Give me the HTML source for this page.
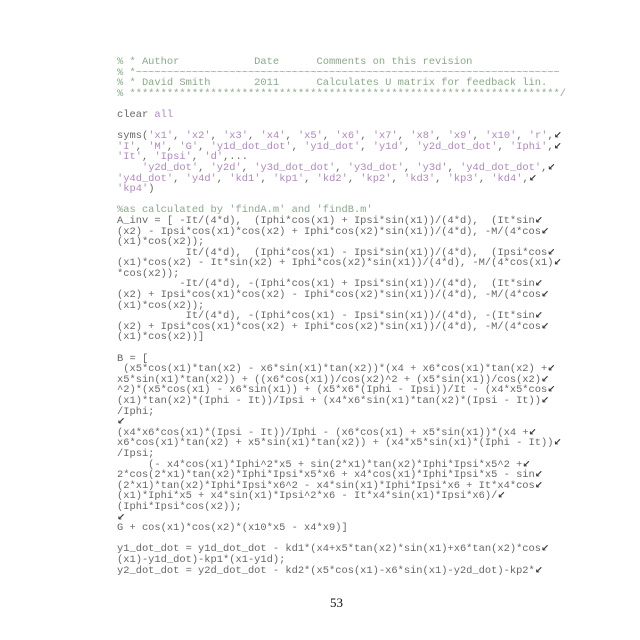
<!DOCTYPE html>
<html><head><meta charset="utf-8"><style>
html,body{margin:0;padding:0;background:#fff;width:640px;height:640px;overflow:hidden}
pre{position:absolute;left:117px;top:57px;margin:0;font-family:"Liberation Mono",monospace;font-size:10.4px;line-height:10.6px;color:#666;white-space:pre}
.c{color:#88aa88}.s{color:#b088c0}
.a{color:#333;font-family:"DejaVu Sans",sans-serif;font-size:9.5px;font-weight:bold}
.pn{position:absolute;left:330px;top:595px;font-family:"Liberation Serif",serif;font-size:13px;color:#111}
</style></head><body>
<pre><span class="c">% * Author            Date      Comments on this revision
% *~~~~~~~~~~~~~~~~~~~~~~~~~~~~~~~~~~~~~~~~~~~~~~~~~~~~~~~~~~~~~~~~~~~~
% * David Smith       2011      Calculates U matrix for feedback lin.
% *********************************************************************/</span>

clear <span class="s">all</span>

syms(<span class="s">'x1'</span>, <span class="s">'x2'</span>, <span class="s">'x3'</span>, <span class="s">'x4'</span>, <span class="s">'x5'</span>, <span class="s">'x6'</span>, <span class="s">'x7'</span>, <span class="s">'x8'</span>, <span class="s">'x9'</span>, <span class="s">'x10'</span>, <span class="s">'r'</span>,<span class="a">↙</span>
<span class="s">'I'</span>, <span class="s">'M'</span>, <span class="s">'G'</span>, <span class="s">'y1d_dot_dot'</span>, <span class="s">'y1d_dot'</span>, <span class="s">'y1d'</span>, <span class="s">'y2d_dot_dot'</span>, <span class="s">'Iphi'</span>,<span class="a">↙</span>
<span class="s">'It'</span>, <span class="s">'Ipsi'</span>, <span class="s">'d'</span>,...
    <span class="s">'y2d_dot'</span>, <span class="s">'y2d'</span>, <span class="s">'y3d_dot_dot'</span>, <span class="s">'y3d_dot'</span>, <span class="s">'y3d'</span>, <span class="s">'y4d_dot_dot'</span>,<span class="a">↙</span>
<span class="s">'y4d_dot'</span>, <span class="s">'y4d'</span>, <span class="s">'kd1'</span>, <span class="s">'kp1'</span>, <span class="s">'kd2'</span>, <span class="s">'kp2'</span>, <span class="s">'kd3'</span>, <span class="s">'kp3'</span>, <span class="s">'kd4'</span>,<span class="a">↙</span>
<span class="s">'kp4'</span>)

<span class="c">%as calculated by 'findA.m' and 'findB.m'</span>
A_inv = [ -It/(4*d),  (Iphi*cos(x1) + Ipsi*sin(x1))/(4*d),  (It*sin<span class="a">↙</span>
(x2) - Ipsi*cos(x1)*cos(x2) + Iphi*cos(x2)*sin(x1))/(4*d), -M/(4*cos<span class="a">↙</span>
(x1)*cos(x2));
           It/(4*d),  (Iphi*cos(x1) - Ipsi*sin(x1))/(4*d),  (Ipsi*cos<span class="a">↙</span>
(x1)*cos(x2) - It*sin(x2) + Iphi*cos(x2)*sin(x1))/(4*d), -M/(4*cos(x1)<span class="a">↙</span>
*cos(x2));
          -It/(4*d), -(Iphi*cos(x1) + Ipsi*sin(x1))/(4*d),  (It*sin<span class="a">↙</span>
(x2) + Ipsi*cos(x1)*cos(x2) - Iphi*cos(x2)*sin(x1))/(4*d), -M/(4*cos<span class="a">↙</span>
(x1)*cos(x2));
           It/(4*d), -(Iphi*cos(x1) - Ipsi*sin(x1))/(4*d), -(It*sin<span class="a">↙</span>
(x2) + Ipsi*cos(x1)*cos(x2) + Iphi*cos(x2)*sin(x1))/(4*d), -M/(4*cos<span class="a">↙</span>
(x1)*cos(x2))]

B = [
 (x5*cos(x1)*tan(x2) - x6*sin(x1)*tan(x2))*(x4 + x6*cos(x1)*tan(x2) +<span class="a">↙</span>
x5*sin(x1)*tan(x2)) + ((x6*cos(x1))/cos(x2)^2 + (x5*sin(x1))/cos(x2)<span class="a">↙</span>
^2)*(x5*cos(x1) - x6*sin(x1)) + (x5*x6*(Iphi - Ipsi))/It - (x4*x5*cos<span class="a">↙</span>
(x1)*tan(x2)*(Iphi - It))/Ipsi + (x4*x6*sin(x1)*tan(x2)*(Ipsi - It))<span class="a">↙</span>
/Iphi;
<span class="a">↙</span>
(x4*x6*cos(x1)*(Ipsi - It))/Iphi - (x6*cos(x1) + x5*sin(x1))*(x4 +<span class="a">↙</span>
x6*cos(x1)*tan(x2) + x5*sin(x1)*tan(x2)) + (x4*x5*sin(x1)*(Iphi - It))<span class="a">↙</span>
/Ipsi;
     (- x4*cos(x1)*Iphi^2*x5 + sin(2*x1)*tan(x2)*Iphi*Ipsi*x5^2 +<span class="a">↙</span>
2*cos(2*x1)*tan(x2)*Iphi*Ipsi*x5*x6 + x4*cos(x1)*Iphi*Ipsi*x5 - sin<span class="a">↙</span>
(2*x1)*tan(x2)*Iphi*Ipsi*x6^2 - x4*sin(x1)*Iphi*Ipsi*x6 + It*x4*cos<span class="a">↙</span>
(x1)*Iphi*x5 + x4*sin(x1)*Ipsi^2*x6 - It*x4*sin(x1)*Ipsi*x6)/<span class="a">↙</span>
(Iphi*Ipsi*cos(x2));
<span class="a">↙</span>
G + cos(x1)*cos(x2)*(x10*x5 - x4*x9)]

y1_dot_dot = y1d_dot_dot - kd1*(x4+x5*tan(x2)*sin(x1)+x6*tan(x2)*cos<span class="a">↙</span>
(x1)-y1d_dot)-kp1*(x1-y1d);
y2_dot_dot = y2d_dot_dot - kd2*(x5*cos(x1)-x6*sin(x1)-y2d_dot)-kp2*<span class="a">↙</span></pre>
<div class="pn">53</div>
</body></html>
